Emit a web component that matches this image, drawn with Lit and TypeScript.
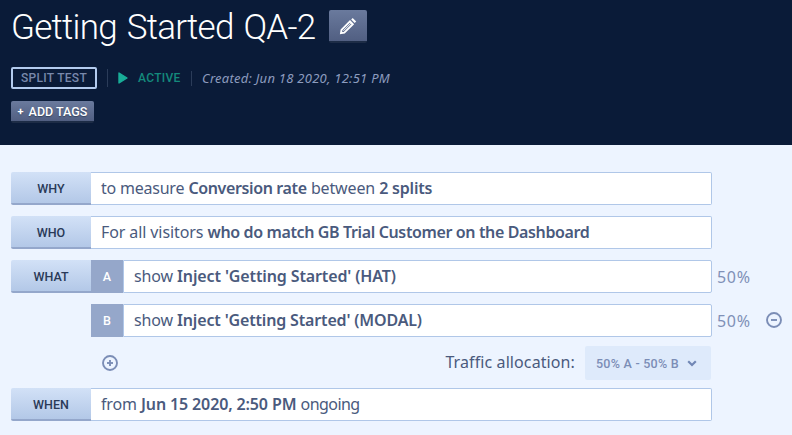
import { LitElement, html, css, svg } from "lit";
import { customElement } from "lit/decorators.js";

type Run = { text: string; strong?: boolean; ls: number };
type Row = { label?: string; variant?: string; runs: Run[]; share?: string; removable?: boolean };

const rows: Row[] = [
  {
    label: "WHY",
    runs: [
      { text: "to measure", ls: -0.22 },
      { text: "Conversion rate", strong: true, ls: -0.37 },
      { text: "between", ls: -0.15 },
      { text: "2 splits", strong: true, ls: -0.2 },
    ],
  },
  {
    label: "WHO",
    runs: [
      { text: "For all visitors", ls: -0.1 },
      { text: "who do match GB Trial Customer on the Dashboard", strong: true, ls: -0.37 },
    ],
  },
  {
    label: "WHAT",
    variant: "A",
    runs: [
      { text: "show", ls: -0.15 },
      { text: "Inject 'Getting Started' (HAT)", strong: true, ls: -0.12 },
    ],
    share: "50%",
  },
  {
    variant: "B",
    runs: [
      { text: "show", ls: -0.15 },
      { text: "Inject 'Getting Started' (MODAL)", strong: true, ls: -0.16 },
    ],
    share: "50%",
    removable: true,
  },
];

const schedule: Row = {
  label: "WHEN",
  runs: [
    { text: "from", ls: -0.15 },
    { text: "Jun 15 2020, 2:50 PM", strong: true, ls: -0.13 },
    { text: "ongoing", ls: -0.55 },
  ],
};

const circleIcon = (plus: boolean) => html`
  <svg class="circle" width="16" height="16" viewBox="0 0 16 16" fill="none" stroke="#7b8db6" stroke-width="1.9">
    <circle cx="8" cy="8" r="7"></circle>
    <path d="M5 8H11"></path>
    ${plus ? svg`<path d="M8 5V11"></path>` : ""}
  </svg>
`;

@customElement("app-root")
export class AppRoot extends LitElement {
  static styles = css`
    :host {
      display: block;
      height: 435px;
      overflow: hidden;
      background: #edf4ff;
      color: #4a5a7d;
      font: 16px/20px "Noto Sans", sans-serif;
      white-space: nowrap;
    }
    * { box-sizing: border-box; }
    header {
      height: 145px;
      padding: 5px 11px 0;
      background: #0a1b38;
      font-family: Roboto, sans-serif;
    }
    .title-line { display: flex; align-items: center; height: 43px; }
    h1 {
      width: 318px;
      margin: 0;
      padding-top: 1px;
      color: #fff;
      font-size: 35px;
      font-weight: 300;
      line-height: 43px;
      letter-spacing: -0.75px;
      word-spacing: 2px;
    }
    .edit {
      display: flex;
      align-items: center;
      justify-content: center;
      width: 38px;
      height: 33px;
      margin-top: -1px;
      padding: 0;
      border: 0;
      border-bottom: 2px solid #1d2c46;
      border-radius: 2px;
      background: linear-gradient(#6a7a9d, #515f82);
    }
    .edit svg { margin-top: 1px; }
    .meta { display: flex; align-items: center; height: 22px; margin-top: 19px; font-size: 12px; line-height: 16px; }
    .kind {
      display: flex;
      align-items: center;
      justify-content: center;
      width: 86px;
      height: 22px;
      border: 2px solid #b3cbee;
      border-radius: 2px;
      color: #7888ab;
      font-weight: 500;
      letter-spacing: 0.3px;
    }
    .rule { width: 1px; height: 18px; margin-left: 10px; background: #2b3c59; }
    .play { margin-left: 10px; }
    .active { width: 43px; margin-left: 10px; color: #148a7c; font-weight: 500; letter-spacing: 0.3px; }
    .rule.short { height: 15px; }
    .created { margin-left: 10px; padding-bottom: 1px; color: #8d9cbf; font: italic 13px/16px "Noto Sans", sans-serif; letter-spacing: 0.26px; }
    .tags {
      display: flex;
      align-items: center;
      justify-content: center;
      width: 83px;
      height: 22px;
      margin-top: 12px;
      padding: 0;
      border: 0;
      border-bottom: 2px solid #1d2c46;
      border-radius: 2px;
      background: linear-gradient(#6a7a9d, #515f82);
      color: #fff;
      font: 500 12.5px/16px Roboto, sans-serif;
      text-shadow: 0 1px 1px #35435f;
    }
    .tags .plus { margin-right: 5px; font-size: 11px; font-weight: 700; }
    .tags span { padding-top: 1px; }
    main { padding: 27px 0 0 11px; }
    .row { display: flex; height: 33px; margin-bottom: 11px; }
    .label {
      display: flex;
      align-items: center;
      justify-content: center;
      flex: none;
      width: 80px;
      padding-top: 2px;
      color: #2a3a58;
      font: 500 12.5px/16px Roboto, sans-serif;
    }
    .label.filled {
      border-bottom: 2px solid #94a7cb;
      border-radius: 2px 0 0 2px;
      background: linear-gradient(#d2e1f7, #b3c8e7);
    }
    .variant {
      display: flex;
      align-items: center;
      justify-content: center;
      width: 32px;
      background: #95a7ca;
      color: #fff;
      font: 500 12.5px/16px Roboto, sans-serif;
    }
    .field {
      display: flex;
      align-items: center;
      flex: none;
      width: 621px;
      padding: 0 0 2px 10px;
      border: 1px solid #b0c7e8;
      border-left: 0;
      border-radius: 0 2px 2px 0;
      background: #fff;
    }
    .field.split { width: 589px; border-left: 1px solid #b0c7e8; }
    .text { white-space: pre; }
    strong { font-weight: 600; }
    .share { width: 49px; margin-left: 5px; padding-top: 1px; line-height: 33px; letter-spacing: 0.7px; color: #7f90b7; }
    .circle { display: block; flex: none; }
    .row .circle { margin-top: 8px; }
    .tools { display: flex; align-items: center; width: 700px; height: 32px; margin: -1px 0 9px; padding-left: 91px; }
    .alloc { margin-left: auto; padding-bottom: 2px; letter-spacing: 0.1px; }
    .select {
      display: flex;
      align-items: center;
      width: 126px;
      height: 34px;
      margin-left: 10px;
      padding-left: 11px;
      border-radius: 2px;
      background: #deeafb;
      color: #7b8db6;
      font: 500 12.5px/16px Roboto, sans-serif;
      letter-spacing: 0.25px;
    }
    .choice { width: 91px; padding-top: 1px; }
  `;

  private row(r: Row) {
    return html`
      <div class="row">
        <div class="label ${r.label ? "filled" : ""}">${r.label ?? ""}</div>
        ${r.variant ? html`<div class="variant">${r.variant}</div>` : ""}
        <div class="field ${r.variant ? "split" : ""}">
          <span class="text">${r.runs.map((run, i) => {
            const gap = i ? " " : "";
            const style = `letter-spacing:${run.ls}px`;
            return run.strong
              ? html`${gap}<strong style=${style}>${run.text}</strong>`
              : html`${gap}<span style=${style}>${run.text}</span>`;
          })}</span>
        </div>
        ${r.share ? html`<span class="share">${r.share}</span>` : ""}
        ${r.removable ? circleIcon(false) : ""}
      </div>
    `;
  }

  render() {
    return html`
      <header>
        <div class="title-line">
          <h1>Getting Started QA-2</h1>
          <button class="edit" aria-label="Edit name">
            <svg width="18" height="18" viewBox="0 0 18 18" fill="none" stroke="#fff" stroke-width="1.9">
              <path d="M2 16.2L2.5 12.9L11 4.4L13.8 7.2L5.3 15.7Z"></path>
              <path d="M4.4 13.8L12.2 6" stroke-width="1"></path>
              <path d="M12.2 2.5L13.7 1L17.2 4.5L15.7 6Z" fill="#fff" stroke="none"></path>
            </svg>
          </button>
        </div>
        <div class="meta">
          <span class="kind">SPLIT TEST</span>
          <i class="rule"></i>
          <svg class="play" width="10" height="12" viewBox="0 0 10 12">
            <path d="M1 1L9 6L1 11Z" fill="#19ad98" stroke="#19ad98" stroke-width="1.4" stroke-linejoin="round"></path>
          </svg>
          <span class="active">ACTIVE</span>
          <i class="rule short"></i>
          <span class="created">Created: Jun 18 2020, 12:51 PM</span>
        </div>
        <button class="tags"><span class="plus">+</span><span>ADD TAGS</span></button>
      </header>
      <main>
        ${rows.map((r) => this.row(r))}
        <div class="tools">
          ${circleIcon(true)}
          <span class="alloc">Traffic allocation:</span>
          <div class="select">
            <span class="choice">50% A - 50% B</span>
            <svg width="10" height="7" viewBox="0 0 10 7" fill="none" stroke="#7187b5" stroke-width="2.2">
              <path d="M1.2 1.2L5 5L8.8 1.2"></path>
            </svg>
          </div>
        </div>
        ${this.row(schedule)}
      </main>
    `;
  }
}
